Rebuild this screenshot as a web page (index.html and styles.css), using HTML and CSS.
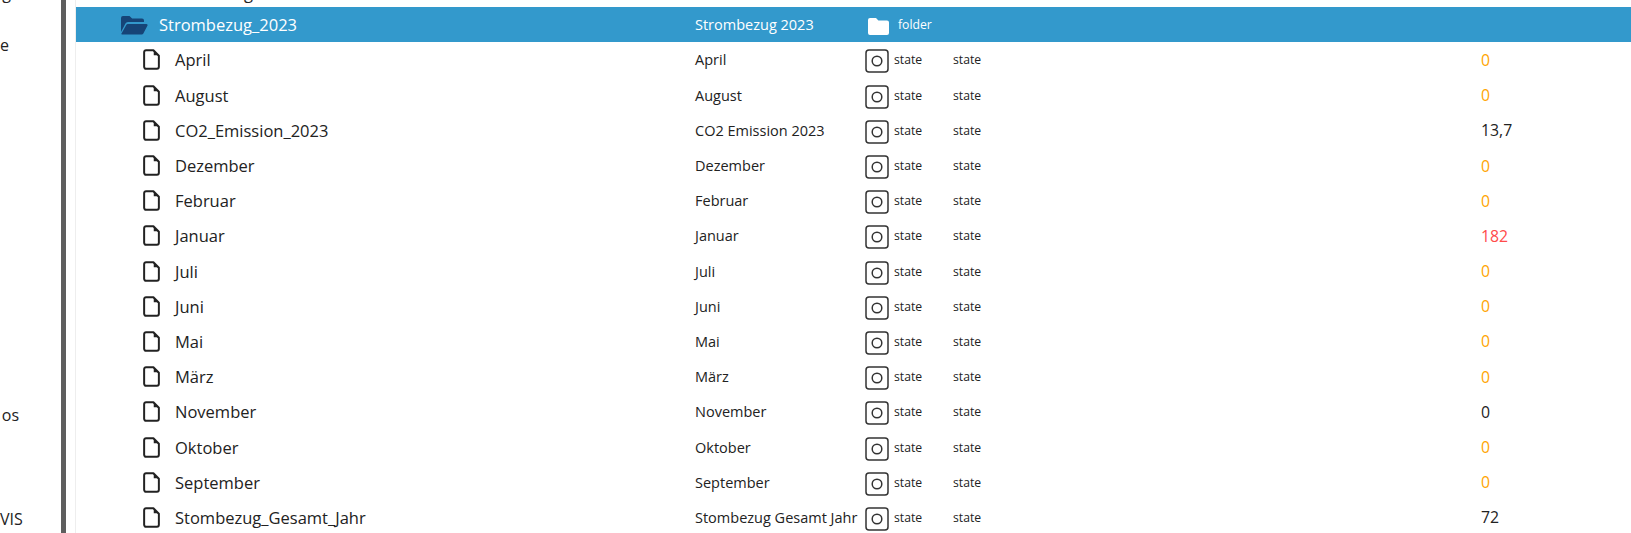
FILE: index.html
```html
<!DOCTYPE html>
<html lang="en">
<head>
    <meta charset="UTF-8">
    <meta name="viewport" content="width=device-width, initial-scale=1.0">
    <title>Objekte</title>
    <link rel="stylesheet" href="styles.css">
</head>
<body>
    <svg class="icon-defs" width="0" height="0">
        <symbol id="file" viewBox="0 0 18 22">
            <path d="M3.2 1.2h7.8L16.8 7V18.8a2 2 0 0 1-2 2H3.2a2 2 0 0 1-2-2V3.2a2 2 0 0 1 2-2z" fill="none" stroke="currentColor" stroke-width="2.1" stroke-linejoin="round"/>
            <path d="M11.4 1.6V6.6h5z" fill="currentColor"/>
        </symbol>
        <symbol id="state" viewBox="0 0 24 24">
            <rect x="1" y="1" width="22" height="22" rx="3" fill="none" stroke="currentColor" stroke-width="1.5"/>
            <circle cx="12" cy="12" r="4.8" fill="none" stroke="currentColor" stroke-width="1.5"/>
        </symbol>
    </svg>
    <div class="page">
        <div class="sidebar">
            <div class="nav-item nav-g">g</div>
            <div class="nav-item nav-e">e</div>
            <div class="nav-item nav-os">os</div>
            <div class="nav-item nav-vis">VIS</div>
        </div>
        <div class="divider"></div>
        <div class="tree">
            <div class="row parent-row">
                <div class="name"><span>Strombezug</span></div>
            </div>
            <div class="row folder-row">
                <div class="name">
                    <svg class="folder-open" viewBox="0 0 28 20"><path d="M1 17V3a2 2 0 0 1 2-2h6.5l2.6 2.6H22a2 2 0 0 1 2 2V7H8a3 3 0 0 0-2.7 1.7z" fill="currentColor"/><path d="M1.2 19 6.4 9.7A1.6 1.6 0 0 1 7.8 9H26.4a1.2 1.2 0 0 1 1 1.8l-4.2 7.9a1.6 1.6 0 0 1-1.4.8H2z" fill="currentColor"/></svg>
                    <span>Strombezug_2023</span>
                </div>
                <div class="title">Strombezug 2023</div>
                <div class="type">
                    <svg class="folder-closed" viewBox="0 0 21 17"><path d="M2 0h6l2.4 2.6H19a2 2 0 0 1 2 2V15a2 2 0 0 1-2 2H2a2 2 0 0 1-2-2V2a2 2 0 0 1 2-2z" fill="currentColor"/></svg>
                    <span>folder</span>
                </div>
                <div class="role"></div>
                <div class="value"></div>
            </div>
            <div class="row">
                <div class="name"><svg class="file-icon"><use href="#file"/></svg><span>April</span></div>
                <div class="title">April</div>
                <div class="type"><svg class="state-icon"><use href="#state"/></svg><span>state</span></div>
                <div class="role">state</div>
                <div class="value orange">0</div>
            </div>
            <div class="row">
                <div class="name"><svg class="file-icon"><use href="#file"/></svg><span>August</span></div>
                <div class="title">August</div>
                <div class="type"><svg class="state-icon"><use href="#state"/></svg><span>state</span></div>
                <div class="role">state</div>
                <div class="value orange">0</div>
            </div>
            <div class="row">
                <div class="name"><svg class="file-icon"><use href="#file"/></svg><span>CO2_Emission_2023</span></div>
                <div class="title">CO2 Emission 2023</div>
                <div class="type"><svg class="state-icon"><use href="#state"/></svg><span>state</span></div>
                <div class="role">state</div>
                <div class="value">13,7</div>
            </div>
            <div class="row">
                <div class="name"><svg class="file-icon"><use href="#file"/></svg><span>Dezember</span></div>
                <div class="title">Dezember</div>
                <div class="type"><svg class="state-icon"><use href="#state"/></svg><span>state</span></div>
                <div class="role">state</div>
                <div class="value orange">0</div>
            </div>
            <div class="row">
                <div class="name"><svg class="file-icon"><use href="#file"/></svg><span>Februar</span></div>
                <div class="title">Februar</div>
                <div class="type"><svg class="state-icon"><use href="#state"/></svg><span>state</span></div>
                <div class="role">state</div>
                <div class="value orange">0</div>
            </div>
            <div class="row">
                <div class="name"><svg class="file-icon"><use href="#file"/></svg><span>Januar</span></div>
                <div class="title">Januar</div>
                <div class="type"><svg class="state-icon"><use href="#state"/></svg><span>state</span></div>
                <div class="role">state</div>
                <div class="value red">182</div>
            </div>
            <div class="row">
                <div class="name"><svg class="file-icon"><use href="#file"/></svg><span>Juli</span></div>
                <div class="title">Juli</div>
                <div class="type"><svg class="state-icon"><use href="#state"/></svg><span>state</span></div>
                <div class="role">state</div>
                <div class="value orange">0</div>
            </div>
            <div class="row">
                <div class="name"><svg class="file-icon"><use href="#file"/></svg><span>Juni</span></div>
                <div class="title">Juni</div>
                <div class="type"><svg class="state-icon"><use href="#state"/></svg><span>state</span></div>
                <div class="role">state</div>
                <div class="value orange">0</div>
            </div>
            <div class="row">
                <div class="name"><svg class="file-icon"><use href="#file"/></svg><span>Mai</span></div>
                <div class="title">Mai</div>
                <div class="type"><svg class="state-icon"><use href="#state"/></svg><span>state</span></div>
                <div class="role">state</div>
                <div class="value orange">0</div>
            </div>
            <div class="row">
                <div class="name"><svg class="file-icon"><use href="#file"/></svg><span>März</span></div>
                <div class="title">März</div>
                <div class="type"><svg class="state-icon"><use href="#state"/></svg><span>state</span></div>
                <div class="role">state</div>
                <div class="value orange">0</div>
            </div>
            <div class="row">
                <div class="name"><svg class="file-icon"><use href="#file"/></svg><span>November</span></div>
                <div class="title">November</div>
                <div class="type"><svg class="state-icon"><use href="#state"/></svg><span>state</span></div>
                <div class="role">state</div>
                <div class="value">0</div>
            </div>
            <div class="row">
                <div class="name"><svg class="file-icon"><use href="#file"/></svg><span>Oktober</span></div>
                <div class="title">Oktober</div>
                <div class="type"><svg class="state-icon"><use href="#state"/></svg><span>state</span></div>
                <div class="role">state</div>
                <div class="value orange">0</div>
            </div>
            <div class="row">
                <div class="name"><svg class="file-icon"><use href="#file"/></svg><span>September</span></div>
                <div class="title">September</div>
                <div class="type"><svg class="state-icon"><use href="#state"/></svg><span>state</span></div>
                <div class="role">state</div>
                <div class="value orange">0</div>
            </div>
            <div class="row">
                <div class="name"><svg class="file-icon"><use href="#file"/></svg><span>Stombezug_Gesamt_Jahr</span></div>
                <div class="title">Stombezug Gesamt Jahr</div>
                <div class="type"><svg class="state-icon"><use href="#state"/></svg><span>state</span></div>
                <div class="role">state</div>
                <div class="value">72</div>
            </div>
        </div>
    </div>
</body>
</html>
```
FILE: styles.css
```css
html, body {
    margin: 0;
    padding: 0;
    height: 533px;
    overflow: hidden;
    background-color: #fff;
}

body {
    font-family: "Open Sans", "Noto Sans", sans-serif;
    color: #222;
}

.icon-defs {
    display: block;
    height: 0;
}

.page {
    display: flex;
    height: 533px;
    overflow: hidden;
}

.sidebar {
    width: 61px;
    flex-shrink: 0;
    font-size: 16px;
    line-height: 22px;
    overflow: hidden;
}

.nav-item {
    text-align: right;
}

.nav-g {
    margin-top: -18px;
    padding-right: 50px;
}

.nav-e {
    margin-top: 30px;
    padding-right: 58px;
}

.nav-os {
    margin-top: 348px;
    padding-right: 42px;
}

.nav-vis {
    margin-top: 82px;
    padding-right: 41px;
}

.divider {
    width: 5px;
    flex-shrink: 0;
    background-color: #5e5e5e;
    margin-right: 9px;
}

.tree {
    flex: 1;
    border-left: 1px solid #eee;
    margin-top: -28px;
}

.row {
    display: grid;
    grid-template-columns: 619px 170px 88px 528px 1fr;
    align-items: center;
    height: 35.2px;
}

.folder-row {
    background-color: #3399cc;
    color: #fff;
}

.name {
    display: flex;
    align-items: center;
    padding-left: 67px;
    font-size: 16.5px;
    white-space: nowrap;
}

.file-icon {
    width: 17px;
    height: 21px;
    margin-right: 15px;
}

.folder-row .name {
    padding-left: 44px;
}

.parent-row .name {
    padding-left: 84px;
    padding-top: 5px;
}

.folder-open {
    width: 28px;
    height: 20px;
    margin-right: 11px;
    color: #164477;
}

.title {
    font-size: 14.5px;
    white-space: nowrap;
}

.type {
    display: flex;
    align-items: center;
    font-size: 12.2px;
}

.state-icon {
    width: 24px;
    height: 24px;
    margin-top: 3px;
    margin-right: 5px;
    color: #333;
}

.folder-closed {
    width: 21px;
    height: 17px;
    margin-top: 3px;
    margin-left: 3px;
    margin-right: 9px;
}

.role {
    font-size: 12.2px;
}

.value {
    font-size: 15.8px;
}

.orange {
    color: #ffa500;
}

.red {
    color: #ff4b4b;
}
```
